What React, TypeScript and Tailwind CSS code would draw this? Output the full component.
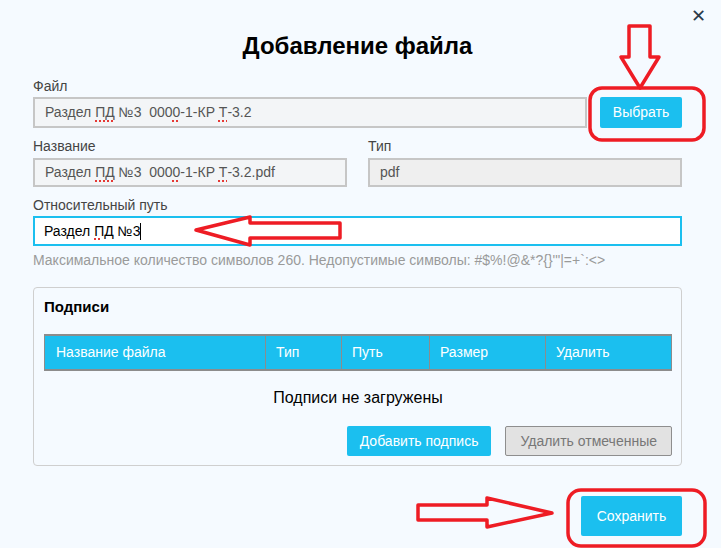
import React from "react";

const BLUE = "bg-[#1bbfef]";

function Squiggle({ children }: { children: React.ReactNode }) {
  return (
    <span className="underline decoration-dotted decoration-[#e53935] decoration-2 underline-offset-[3px]">
      {children}
    </span>
  );
}

export default function App() {
  return (
    <div
      className="relative w-[721px] h-[548px] bg-[#f5faff] overflow-hidden text-[#333]"
      style={{ fontFamily: '"Liberation Sans", Arial, sans-serif' }}
    >
      <button className="absolute right-[15px] top-[7px] text-[18px] leading-none text-[#2b3a4a]">
        ✕
      </button>

      <div className="pl-[33px] pr-[39px] pt-[32px] flex flex-col">
        <h1 className="text-center text-[24px] font-bold text-black leading-[28px]">
          Добавление файла
        </h1>

        <label className="mt-[18px] text-[14px] leading-[16px] text-[#444]">Файл</label>
        <div className="mt-[3px] flex gap-[13px]">
          <div className="flex-1 h-[31px] border-2 border-[#c6c6c6] bg-[#f3f5f7] flex items-center px-[10px] text-[14px] text-[#555]">
            <span>
              Раздел <Squiggle>ПД</Squiggle> №3&nbsp;&nbsp;000<Squiggle>0</Squiggle>-1-КР <Squiggle>Т</Squiggle>-3.2
            </span>
          </div>
          <button className={`w-[82px] h-[31px] ${BLUE} rounded-[2px] text-white text-[14px]`}>
            Выбрать
          </button>
        </div>

        <div className="mt-[10px] grid grid-cols-2 gap-x-[21px]">
          <div className="flex flex-col">
            <label className="text-[14px] leading-[16px] text-[#444]">Название</label>
            <div className="mt-[4px] h-[29px] border-2 border-[#c6c6c6] bg-[#f3f5f7] flex items-center px-[10px] text-[14px] text-[#555]">
              <span>
                Раздел <Squiggle>ПД</Squiggle> №3&nbsp;&nbsp;000<Squiggle>0</Squiggle>-1-КР <Squiggle>Т</Squiggle>-3.2.pdf
              </span>
            </div>
          </div>
          <div className="flex flex-col">
            <label className="text-[14px] leading-[16px] text-[#444]">Тип</label>
            <div className="mt-[4px] h-[29px] border-2 border-[#c6c6c6] bg-[#efefef] flex items-center px-[10px] text-[14px] text-[#555]">
              pdf
            </div>
          </div>
        </div>

        <label className="mt-[10px] text-[14px] leading-[16px] text-[#444]">Относительный путь</label>
        <div className="mt-[3px] h-[30px] border-2 border-[#1bbfef] bg-white flex items-center px-[9px] text-[14px] text-black">
          <span>
            Раздел <Squiggle>ПД</Squiggle> №3
          </span>
          <span className="w-px h-[17px] bg-black" />
        </div>
        <p className="mt-[6px] text-[14px] leading-[16px] text-[#9a9a9a]">
          Максимальное количество символов 260. Недопустимые символы: #$%!@&amp;*?{"{}"}'"|=+`:&lt;&gt;
        </p>

        <div className="mt-[19px] border border-[#cfcfcf] rounded-[4px] pl-[10px] pr-[9px] pt-[10px] pb-[9px] flex flex-col">
          <h2 className="text-[15px] font-bold text-black leading-[18px]">Подписи</h2>
          <div className={`mt-[18px] h-[37px] ${BLUE} border-y-2 border-[#8c8c8c] flex text-white text-[14px]`}>
            <div className="w-[222px] border-x border-[#8c8c8c] flex items-center pl-[11px]">Название файла</div>
            <div className="w-[76px] border-r border-[#8c8c8c] flex items-center pl-[10px]">Тип</div>
            <div className="w-[88px] border-r border-[#8c8c8c] flex items-center pl-[10px]">Путь</div>
            <div className="w-[116px] border-r border-[#8c8c8c] flex items-center pl-[10px]">Размер</div>
            <div className="flex-1 border-r border-[#8c8c8c] flex items-center pl-[10px]">Удалить</div>
          </div>
          <div className="mt-[18px] text-center text-[16px] text-black leading-[18px]">
            Подписи не загружены
          </div>
          <div className="mt-[19px] flex justify-end gap-[14px]">
            <button className={`h-[30px] px-[13px] ${BLUE} rounded-[2px] text-white text-[14px]`}>
              Добавить подпись
            </button>
            <button className="h-[30px] px-[14px] bg-[#e2e2e2] border border-[#8e8e8e] rounded-[2px] text-[#777] text-[14px]">
              Удалить отмеченные
            </button>
          </div>
        </div>

        <div className="mt-[30px] flex justify-end">
          <button className={`w-[101px] h-[40px] ${BLUE} rounded-[2px] text-white text-[14px]`}>
            Сохранить
          </button>
        </div>
      </div>

      <svg className="absolute inset-0 pointer-events-none" width="721" height="548" viewBox="0 0 721 548">
        <g fill="none" stroke="#ee1c24" strokeWidth="3.5" strokeLinejoin="round">
          <polygon points="629,26 650,26 650,57 659,57 640,88 621,57 629,57" />
          <rect x="590" y="88" width="114" height="52" rx="12" />
          <polygon points="196,230 250,217 250,223 340,223 340,238 250,238 250,245" />
          <polygon points="552,513 487,498 487,505 418,505 418,520 487,520 487,527" />
          <rect x="568" y="490" width="137" height="56" rx="13" />
        </g>
      </svg>
    </div>
  );
}
